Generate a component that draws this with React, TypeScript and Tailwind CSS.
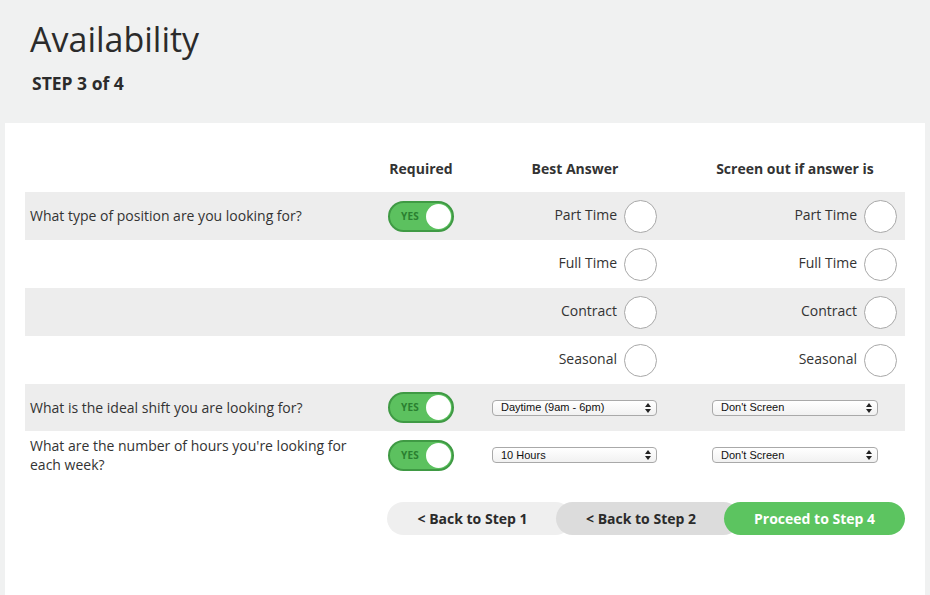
import React from "react";

const font = { fontFamily: '"Open Sans", "Liberation Sans", sans-serif' };

function Toggle() {
  return (
    <div className="relative w-[66px] h-[31px] rounded-full bg-[#5cc15f] border-2 border-[#3f9a44] flex items-center">
      <span className="ml-[11px] text-[10px] font-bold text-[#2a7f30] tracking-[0.2px]">YES</span>
      <div className="absolute right-[1px] top-[1px] w-[25px] h-[25px] rounded-full bg-white" />
    </div>
  );
}

function Radio() {
  return <div className="w-[33px] h-[33px] rounded-full bg-white border border-[#a8a8a8]" />;
}

function Select({ text, w }: { text: string; w: string }) {
  return (
    <div
      className={`${w} h-[16px] rounded-[4px] border border-[#a9a9a9] bg-gradient-to-b from-white to-[#f1f1f1] flex items-center justify-between pl-[8px] pr-[5px] text-[11px] text-[#111]`}
      style={{ fontFamily: '"Liberation Sans", Arial, sans-serif' }}
    >
      <span>{text}</span>
      <svg width="6" height="10" viewBox="0 0 6 10">
        <path d="M0 4 L3 0 L6 4 Z M0 6 L3 10 L6 6 Z" fill="#222" />
      </svg>
    </div>
  );
}

function Row({
  grey,
  label,
  toggle,
  best,
  screen,
}: {
  grey?: boolean;
  label?: React.ReactNode;
  toggle?: boolean;
  best: React.ReactNode;
  screen: React.ReactNode;
}) {
  return (
    <div className={`flex items-center h-[48px] ${grey ? "bg-[#ededed]" : "bg-white"}`}>
      <div className="w-[363px] pl-[5px] pr-[10px] pb-[1px] text-[14px] leading-[19px] text-[#333]">{label}</div>
      <div className="w-[100px]">{toggle && <Toggle />}</div>
      <div className="w-[177px] flex items-center justify-end">{best}</div>
      <div className="w-[240px] flex items-center justify-end">{screen}</div>
    </div>
  );
}

function Opt({ t }: { t: string }) {
  return (
    <div className="flex items-center pr-[8px]">
      <span className="text-[14px] text-[#333] mr-[7px] pb-[3px]">{t}</span>
      <Radio />
    </div>
  );
}

export default function App() {
  const opts = ["Part Time", "Full Time", "Contract", "Seasonal"];
  return (
    <div className="w-[930px] h-[595px] bg-[#f0f1f1] overflow-hidden" style={font}>
      <div className="h-[123px] pl-[30px] pt-[17px]">
        <h1 className="text-[34px] leading-[44px] text-[#2b2b2b] font-normal">Availability</h1>
        <div className="mt-[9px] ml-[2px] text-[17.5px] font-bold text-[#2b2b2b]">STEP 3 of 4</div>
      </div>
      <div className="mx-[5px] bg-white h-[472px] px-[20px]">
        <div className="flex items-center h-[69px] pt-[21px] text-[14px] font-bold text-[#333]">
          <div className="w-[363px]" />
          <div className="w-[66px] text-center">Required</div>
          <div className="w-[242px] text-center">Best Answer</div>
          <div className="w-[198px] text-center">Screen out if answer is</div>
        </div>
        {opts.map((o, i) => (
          <Row
            key={o}
            grey={i % 2 === 0}
            label={i === 0 ? "What type of position are you looking for?" : undefined}
            toggle={i === 0}
            best={<Opt t={o} />}
            screen={<Opt t={o} />}
          />
        ))}
        <div className="flex items-center h-[47px] bg-[#ededed]">
          <div className="w-[363px] pl-[5px] pb-[1px] text-[14px] text-[#333]">What is the ideal shift you are looking for?</div>
          <div className="w-[104px]"><Toggle /></div>
          <Select text="Daytime (9am - 6pm)" w="w-[165px]" />
          <div className="w-[55px]" />
          <Select text="Don't Screen" w="w-[166px]" />
        </div>
        <div className="flex items-center h-[48px] bg-white">
          <div className="w-[363px] pl-[5px] pr-[30px] text-[14px] leading-[19px] text-[#333]">
            What are the number of hours you're looking for each week?
          </div>
          <div className="w-[104px]"><Toggle /></div>
          <Select text="10 Hours" w="w-[165px]" />
          <div className="w-[55px]" />
          <Select text="Don't Screen" w="w-[166px]" />
        </div>
        <div className="flex mt-[23px] ml-[362px] text-[14px] font-bold text-[#2b2b2b]">
          <div className="relative z-0 w-[185px] h-[33px] rounded-full bg-[#efefef] flex items-center justify-center pr-[14px]">
            &lt; Back to Step 1
          </div>
          <div className="relative z-10 -ml-[16px] w-[184px] h-[33px] rounded-full bg-[#dcdcdc] flex items-center justify-center pr-[14px]">
            &lt; Back to Step 2
          </div>
          <div className="relative z-20 -ml-[16px] w-[181px] h-[33px] rounded-full bg-[#5cc460] text-white flex items-center justify-center">
            Proceed to Step 4
          </div>
        </div>
      </div>
    </div>
  );
}
